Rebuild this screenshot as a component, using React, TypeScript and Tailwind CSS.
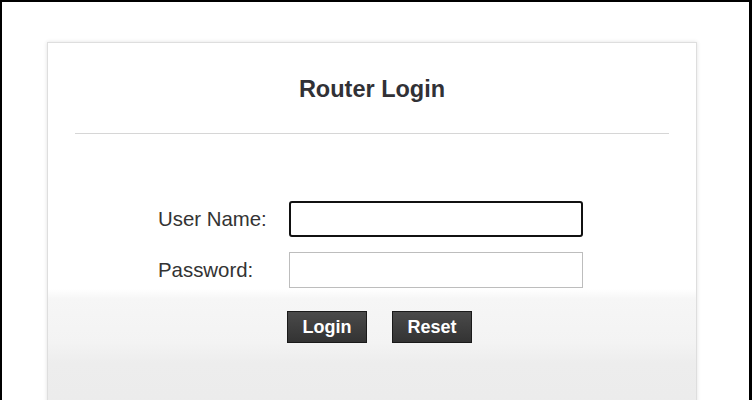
import React from 'react';

const font = { fontFamily: '"Liberation Sans", Arial, sans-serif' };

// --- Main Page Component ---
const App: React.FC = () => {
  return (
    <div
      className="h-[400px] w-[752px] overflow-hidden border-t-2 border-l-2 border-r-[3px] border-black bg-white"
      style={font}
    >
      <div className="ml-[45px] mt-[40px] h-[420px] w-[650px] border border-[#dedede] bg-[linear-gradient(to_bottom,#ffffff_0px,#ffffff_246px,#f6f6f6_256px,#f3f3f3_300px,#ededed_320px,#eaeaea_420px)] shadow-[0_0_4px_rgba(0,0,0,0.12)]">
        {/* --- Header --- */}
        <h1 className="pt-[33px] text-center text-[23.5px] font-bold leading-[26px] text-[#313136]">
          Router Login
        </h1>
        <div className="mx-[27px] mt-[31px] h-px bg-[#d6d6d6]" />

        {/* --- Form --- */}
        <div className="mt-[67px] flex flex-col gap-[15px]">
          <div className="flex items-center">
            <label className="ml-[110px] w-[131px] text-[20.4px] leading-none text-[#333]">User Name:</label>
            <input
              type="text"
              className="h-[36px] w-[294px] rounded-[3px] border-2 border-[#111] bg-white px-2 outline-none"
            />
          </div>
          <div className="flex items-center">
            <label className="ml-[110px] w-[131px] text-[20.4px] leading-none text-[#333]">Password:</label>
            <input
              type="password"
              className="h-[36px] w-[294px] border border-[#bdbdbd] bg-white px-2 outline-none"
            />
          </div>
        </div>

        {/* --- Actions --- */}
        <div className="ml-[239px] mt-[23px] flex gap-[25px]">
          <button className="h-[32px] w-[80px] border border-[#1a1a1a] bg-[linear-gradient(to_bottom,#4a4a4a,#333333)] text-[18px] font-bold text-white">
            Login
          </button>
          <button className="h-[32px] w-[80px] border border-[#1a1a1a] bg-[linear-gradient(to_bottom,#4a4a4a,#333333)] text-[18px] font-bold text-white">
            Reset
          </button>
        </div>
      </div>
    </div>
  );
};

export default App;
